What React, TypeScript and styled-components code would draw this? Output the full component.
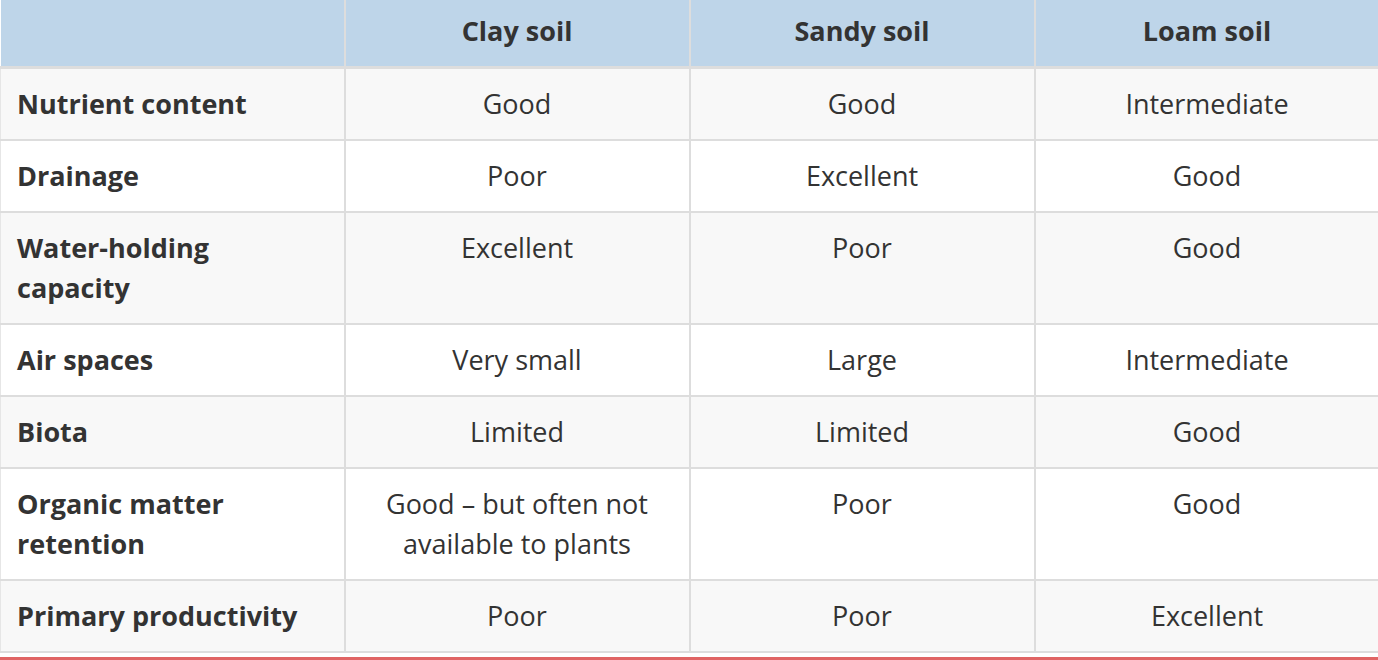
import React from "react";
import styled, { createGlobalStyle } from "styled-components";

const Global = createGlobalStyle`
  html, body { margin: 0; padding: 0; background: #ffffff; }
  body { font-family: "Open Sans", "Liberation Sans", sans-serif; color: #333333; }
`;

const Page = styled.div`
  width: 1378px;
  height: 660px;
  overflow: hidden;
  background: #ffffff;
`;

const Table = styled.table`
  width: 1378px;
  border-collapse: collapse;
  table-layout: fixed;
  font-size: 27px;
  line-height: 40px;
`;

const HeadCell = styled.th<{ $first?: boolean }>`
  background: #bed5e9;
  height: 67px;
  padding: 0 16px 4px 16px;
  box-sizing: border-box;
  font-weight: 700;
  text-align: center;
  vertical-align: middle;
  color: #333333;
  border-left: ${(p) => (p.$first ? "none" : "2px solid #dddddd")};
  border-bottom: 3px solid #dddddd;
`;

const Row = styled.tr<{ $striped: boolean }>`
  background: ${(p) => (p.$striped ? "#f8f8f8" : "#ffffff")};
`;

const LabelCell = styled.td`
  padding: 15px 40px 15px 16px;
  font-weight: 700;
  text-align: left;
  vertical-align: top;
  border-bottom: 2px solid #dddddd;
  border-left: 1px solid #e6e6e6;
`;

const ValueCell = styled.td`
  padding: 15px 16px 15px 16px;
  text-align: center;
  vertical-align: top;
  border-bottom: 2px solid #dddddd;
  border-left: 2px solid #dddddd;
`;

const Footer = styled.div`
  margin-top: 4px;
  border-top: 3px solid #e06464;
`;

const rows: [string, string, string, string][] = [
  ["Nutrient content", "Good", "Good", "Intermediate"],
  ["Drainage", "Poor", "Excellent", "Good"],
  ["Water-holding capacity", "Excellent", "Poor", "Good"],
  ["Air spaces", "Very small", "Large", "Intermediate"],
  ["Biota", "Limited", "Limited", "Good"],
  ["Organic matter retention", "Good – but often not available to plants", "Poor", "Good"],
  ["Primary productivity", "Poor", "Poor", "Excellent"],
];

export default function App() {
  return (
    <Page>
      <Global />
      <Table>
        <colgroup>
          <col style={{ width: 344 }} />
          <col style={{ width: 345 }} />
          <col style={{ width: 345 }} />
          <col style={{ width: 344 }} />
        </colgroup>
        <thead>
          <tr>
            <HeadCell $first></HeadCell>
            <HeadCell>Clay soil</HeadCell>
            <HeadCell>Sandy soil</HeadCell>
            <HeadCell>Loam soil</HeadCell>
          </tr>
        </thead>
        <tbody>
          {rows.map((r, i) => (
            <Row key={r[0]} $striped={i % 2 === 0}>
              <LabelCell>{r[0]}</LabelCell>
              <ValueCell>{r[1]}</ValueCell>
              <ValueCell>{r[2]}</ValueCell>
              <ValueCell>{r[3]}</ValueCell>
            </Row>
          ))}
        </tbody>
      </Table>
      <Footer />
    </Page>
  );
}
